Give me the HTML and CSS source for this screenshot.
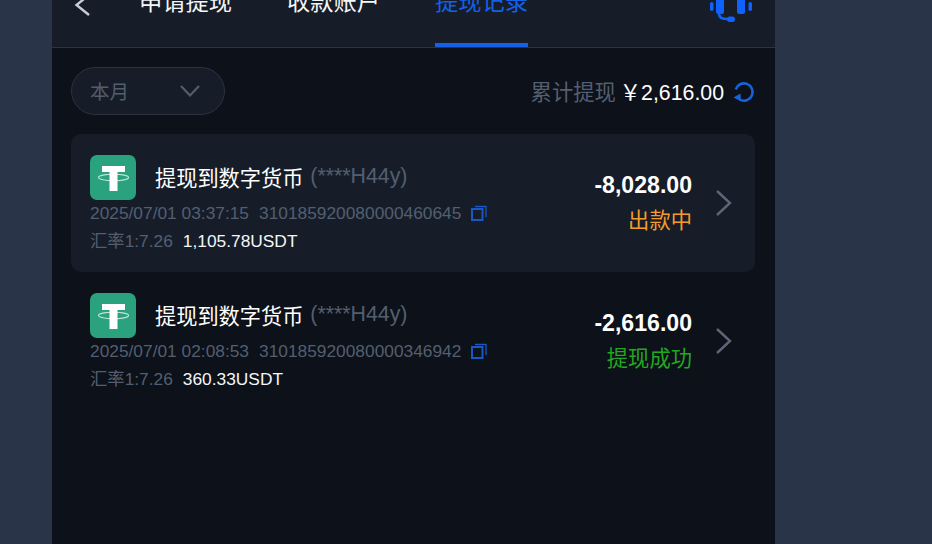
FILE: index.html
```html
<!DOCTYPE html>
<html lang="zh-CN">
<head>
    <meta charset="UTF-8">
    <meta name="viewport" content="width=device-width, initial-scale=1.0">
    <title>提现记录</title>
    <link rel="stylesheet" href="styles.css">
</head>
<body>

    <div class="page">
        <div class="header">
            <svg class="back" width="18" height="24" viewBox="0 0 18 24"><path d="M15 2 L2.500 12 L15 22" fill="none" stroke="#c9ced6" stroke-width="2.400"/></svg>
            <div class="tabs">
                <div class="tab">申请提现</div>
                <div class="tab">收款账户</div>
                <div class="tab active">提现记录</div>
            </div>
            <svg class="support" width="42" height="24" viewBox="0 0 42 24">
                <rect x="0" y="2" width="3.500" height="9" rx="1.700" fill="#0f62fe"/>
                <rect x="38.500" y="2" width="3.500" height="9" rx="1.700" fill="#0f62fe"/>
                <rect x="6" y="-6" width="8" height="20" rx="2.500" fill="#0f62fe"/>
                <rect x="27" y="-6" width="8" height="20" rx="2.500" fill="#0f62fe"/>
                <path d="M9 13 C9 18 12 19 18 19" fill="none" stroke="#0f62fe" stroke-width="2.500"/>
                <rect x="17" y="16.500" width="8" height="5.500" rx="2.700" fill="#0f62fe"/>
            </svg>
        </div>

        <div class="filter-row">
            <div class="month-select">
                <span class="month-label">本月</span>
                <svg width="22" height="14" viewBox="0 0 22 14"><path d="M2 2 L11 11.500 L20 2" fill="none" stroke="#535d6c" stroke-width="2.200"/></svg>
            </div>
            <div class="total">
                <span class="total-label">累计提现</span>
                <span class="total-value">￥2,616.00</span>
                <svg class="refresh" width="22" height="22" viewBox="0 0 22 22"><path d="M2.700 8.500 A8.660 8.660 0 1 1 7 18.700" fill="none" stroke="#1662d8" stroke-width="2.600"/><path d="M0.500 16.500 L7.500 12.500 L8 20.500 Z" fill="#1662d8"/></svg>
            </div>
        </div>

        <div class="record card">
            <div class="record-main">
                <div class="record-title">
                    <svg class="coin" width="46" height="45" viewBox="0 0 46 45">
                        <rect width="46" height="45" rx="7" fill="#2aa27d"/>
                        <path d="M12 11 H35 V17 H27.500 V36 H19.500 V17 H12 Z" fill="#fff"/>
                        <ellipse cx="23.500" cy="22.500" rx="15" ry="3.200" fill="none" stroke="#fff" stroke-opacity="0.700" stroke-width="1.100"/>
                    </svg>
                    <span class="name">提现到数字货币</span>
                    <span class="addr">(****H44y)</span>
                </div>
                <div class="record-meta">
                    <span>2025/07/01 03:37:15</span>
                    <span>310185920080000460645</span>
                    <svg class="copy" width="16" height="16" viewBox="0 0 16 16"><rect x="1" y="4" width="10.500" height="11" fill="none" stroke="#1a56c4" stroke-width="2"/><path d="M4 1.500 H15 V12" fill="none" stroke="#1a56c4" stroke-width="1.300"/></svg>
                </div>
                <div class="record-rate">
                    <span>汇率1:7.26</span>
                    <span class="usdt">1,105.78USDT</span>
                </div>
            </div>
            <div class="record-side">
                <div class="amount">-8,028.00</div>
                <div class="status pending">出款中</div>
            </div>
            <svg class="arrow" width="18" height="28" viewBox="0 0 18 28"><path d="M2 2 L15 14 L2 26" fill="none" stroke="#5b6677" stroke-width="2.400"/></svg>
        </div>

        <div class="record">
            <div class="record-main">
                <div class="record-title">
                    <svg class="coin" width="46" height="45" viewBox="0 0 46 45">
                        <rect width="46" height="45" rx="7" fill="#2aa27d"/>
                        <path d="M12 11 H35 V17 H27.500 V36 H19.500 V17 H12 Z" fill="#fff"/>
                        <ellipse cx="23.500" cy="22.500" rx="15" ry="3.200" fill="none" stroke="#fff" stroke-opacity="0.700" stroke-width="1.100"/>
                    </svg>
                    <span class="name">提现到数字货币</span>
                    <span class="addr">(****H44y)</span>
                </div>
                <div class="record-meta">
                    <span>2025/07/01 02:08:53</span>
                    <span>310185920080000346942</span>
                    <svg class="copy" width="16" height="16" viewBox="0 0 16 16"><rect x="1" y="4" width="10.500" height="11" fill="none" stroke="#1a56c4" stroke-width="2"/><path d="M4 1.500 H15 V12" fill="none" stroke="#1a56c4" stroke-width="1.300"/></svg>
                </div>
                <div class="record-rate">
                    <span>汇率1:7.26</span>
                    <span class="usdt">360.33USDT</span>
                </div>
            </div>
            <div class="record-side">
                <div class="amount">-2,616.00</div>
                <div class="status done">提现成功</div>
            </div>
            <svg class="arrow" width="18" height="28" viewBox="0 0 18 28"><path d="M2 2 L15 14 L2 26" fill="none" stroke="#5b6677" stroke-width="2.400"/></svg>
        </div>
    </div>

</body>
</html>
```

FILE: styles.css
```css
html, body {
    height: 100%;
}
body {
    margin: 0;
    overflow: hidden;
    background-color: #2a3448;
    font-family: 'Liberation Sans', 'Noto Sans CJK SC', sans-serif;
    color: #fff;
}
.page {
    width: 723px;
    height: 544px;
    margin-left: 52px;
    background-color: #0d1119;
    overflow: hidden;
}
.header {
    display: flex;
    align-items: flex-start;
    height: 47px;
    padding-left: 22px;
    background-color: #161d29;
    border-bottom: 1px solid #2c3441;
    overflow: hidden;
}
.back {
    margin-top: -7px;
    flex: none;
}
.tabs {
    display: flex;
    gap: 55px;
    margin-left: 47px;
}
.tab {
    height: 47px;
    margin-top: -13px;
    font-size: 23.250px;
    line-height: 30px;
    box-sizing: border-box;
    color: #f4f6f8;
}
.tab.active {
    color: #1560e6;
    height: 60px;
    border-bottom: 4px solid #1560e6;
}
.support {
    margin-left: 182px;
    flex: none;
}
.filter-row {
    display: flex;
    justify-content: space-between;
    align-items: center;
    padding: 19px 20px 19px 19px;
}
.month-select {
    display: flex;
    justify-content: space-between;
    align-items: center;
    box-sizing: border-box;
    width: 154px;
    height: 48px;
    padding: 0 23px 0 18px;
    background-color: #161d29;
    border: 1px solid #2a323e;
    border-radius: 24px;
    font-size: 19.500px;
    color: #535d6c;
}
.month-label {
    margin-top: -2px;
}
.total {
    display: flex;
    align-items: center;
    font-size: 21.300px;
}
.total-label {
    color: #535f70;
    margin-right: 4px;
    margin-top: -2px;
}
.total-value {
    margin-right: 9px;
    margin-top: -1px;
}
.refresh {
    margin-top: 2px;
}
.record {
    display: flex;
    align-items: center;
    height: 138px;
    margin: 0 20px 0 19px;
    padding: 0 22px 0 19px;
    box-sizing: border-box;
    border-radius: 10px;
}
.record.card {
    background-color: #161d29;
}
.record-main {
    flex: 1;
    min-width: 0;
}
.record-title {
    display: flex;
    align-items: center;
    height: 46px;
}
.coin {
    flex: none;
    margin-top: 3px;
    margin-right: 19px;
}
.name {
    font-size: 21.200px;
}
.addr {
    margin-left: 7px;
    font-size: 21.300px;
    color: #535f70;
}
.record-meta {
    display: flex;
    align-items: center;
    gap: 10px;
    margin-top: 2px;
    font-size: 17.330px;
    line-height: 24px;
    color: #535f70;
}
.copy {
    flex: none;
}
.record-rate {
    display: flex;
    gap: 10px;
    margin-top: 4px;
    font-size: 17.330px;
    line-height: 24px;
    color: #535f70;
}
.usdt {
    color: #f4f6f8;
}
.record-side {
    text-align: right;
    margin-right: 23px;
    margin-top: -1px;
}
.amount {
    font-size: 23.100px;
    font-weight: bold;
    line-height: 30px;
}
.status {
    margin-top: 6px;
    font-size: 21.300px;
    line-height: 30px;
}
.pending {
    color: #f39c2b;
}
.done {
    color: #22a820;
}
.arrow {
    flex: none;
}
```
